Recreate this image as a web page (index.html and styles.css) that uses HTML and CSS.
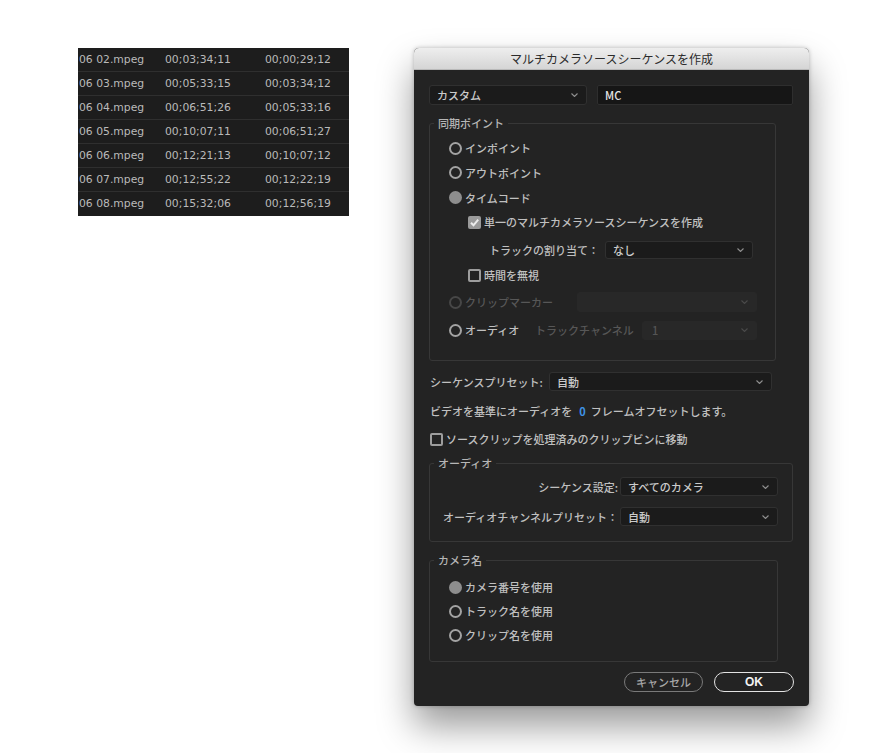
FILE: index.html
```html
<!DOCTYPE html>
<html lang="ja">
<head>
<meta charset="utf-8">
<title>マルチカメラソースシーケンスを作成</title>
<link rel="stylesheet" href="styles.css">
</head>
<body>
<div class="page">
  <div class="clips">
    <div class="trow"><span class="c1">06 02.mpeg</span><span class="c2">00;03;34;11</span><span class="c3">00;00;29;12</span></div>
    <div class="trow"><span class="c1">06 03.mpeg</span><span class="c2">00;05;33;15</span><span class="c3">00;03;34;12</span></div>
    <div class="trow"><span class="c1">06 04.mpeg</span><span class="c2">00;06;51;26</span><span class="c3">00;05;33;16</span></div>
    <div class="trow"><span class="c1">06 05.mpeg</span><span class="c2">00;10;07;11</span><span class="c3">00;06;51;27</span></div>
    <div class="trow"><span class="c1">06 06.mpeg</span><span class="c2">00;12;21;13</span><span class="c3">00;10;07;12</span></div>
    <div class="trow"><span class="c1">06 07.mpeg</span><span class="c2">00;12;55;22</span><span class="c3">00;12;22;19</span></div>
    <div class="trow"><span class="c1">06 08.mpeg</span><span class="c2">00;15;32;06</span><span class="c3">00;12;56;19</span></div>
  </div>

  <div class="dialog">
    <div class="titlebar">マルチカメラソースシーケンスを作成</div>
    <div class="dbody">
      <div class="toprow">
        <div class="select preset"><span>カスタム</span><svg class="chev" viewBox="0 0 7 4"><polyline points="0.5,0.5 3.5,3.5 6.5,0.5"/></svg></div>
        <div class="textfield">MC</div>
      </div>

      <fieldset class="group sync">
        <legend>同期ポイント</legend>
        <div class="row r1 ind-radio"><span class="radio"></span><span class="lbl">インポイント</span></div>
        <div class="row r2 ind-radio"><span class="radio"></span><span class="lbl">アウトポイント</span></div>
        <div class="row r3 ind-radio"><span class="radio on"></span><span class="lbl">タイムコード</span></div>
        <div class="row r4 ind-check"><span class="check on"><svg viewBox="0 0 13 13"><polyline points="3,6.8 5.5,9.3 10.2,3.6"/></svg></span><span class="lbl">単一のマルチカメラソースシーケンスを作成</span></div>
        <div class="row r5 ind-track"><span class="lbl">トラックの割り当て：</span><div class="select track"><span>なし</span><svg class="chev" viewBox="0 0 7 4"><polyline points="0.5,0.5 3.5,3.5 6.5,0.5"/></svg></div></div>
        <div class="row r6 ind-check"><span class="check"></span><span class="lbl">時間を無視</span></div>
        <div class="row r7 ind-radio"><span class="radio off"></span><span class="lbl dim marker-lbl">クリップマーカー</span><div class="select disabled marker"><span></span><svg class="chev" viewBox="0 0 7 4"><polyline points="0.5,0.5 3.5,3.5 6.5,0.5"/></svg></div></div>
        <div class="row r8 ind-radio"><span class="radio"></span><span class="lbl audio-lbl">オーディオ</span><span class="lbl dim chan-lbl">トラックチャンネル</span><div class="select disabled chan"><span>1</span><svg class="chev" viewBox="0 0 7 4"><polyline points="0.5,0.5 3.5,3.5 6.5,0.5"/></svg></div></div>
      </fieldset>

      <div class="line preset-line"><span class="lbl">シーケンスプリセット:</span><div class="select seq"><span>自動</span><svg class="chev" viewBox="0 0 7 4"><polyline points="0.5,0.5 3.5,3.5 6.5,0.5"/></svg></div></div>
      <div class="line offset-line"><span class="lbl">ビデオを基準にオーディオを<span class="num">0</span>フレームオフセットします。</span></div>
      <div class="line move-line"><span class="check"></span><span class="lbl">ソースクリップを処理済みのクリップビンに移動</span></div>

      <fieldset class="group audio">
        <legend>オーディオ</legend>
        <div class="agrid">
          <span class="lbl right">シーケンス設定:</span>
          <div class="select"><span>すべてのカメラ</span><svg class="chev" viewBox="0 0 7 4"><polyline points="0.5,0.5 3.5,3.5 6.5,0.5"/></svg></div>
          <span class="lbl right">オーディオチャンネルプリセット：</span>
          <div class="select"><span>自動</span><svg class="chev" viewBox="0 0 7 4"><polyline points="0.5,0.5 3.5,3.5 6.5,0.5"/></svg></div>
        </div>
      </fieldset>

      <fieldset class="group camera">
        <legend>カメラ名</legend>
        <div class="row crow ind-radio"><span class="radio on"></span><span class="lbl">カメラ番号を使用</span></div>
        <div class="row crow ind-radio"><span class="radio"></span><span class="lbl">トラック名を使用</span></div>
        <div class="row crow ind-radio"><span class="radio"></span><span class="lbl">クリップ名を使用</span></div>
      </fieldset>

      <div class="buttons">
        <div class="btn cancel">キャンセル</div>
        <div class="btn ok">OK</div>
      </div>
    </div>
  </div>
</div>
</body>
</html>
```

FILE: styles.css
```css
html, body {
  margin: 0;
  padding: 0;
  background: #ffffff;
}

body {
  font-family: "Noto Sans CJK JP", "DejaVu Sans", sans-serif;
  font-size: 11px;
  font-weight: 500;
  color: #c0c0c0;
}

.page {
  display: flex;
  align-items: flex-start;
  padding: 48px 0 0 78px;
  gap: 65px;
  min-height: 753px;
  box-sizing: border-box;
}

/* clip table */
.clips {
  width: 271px;
  background: #1d1d1d;
  font-family: "DejaVu Sans", sans-serif;
  font-weight: normal;
  font-size: 10.8px;
  color: #bababa;
}

.trow {
  display: flex;
  align-items: center;
  height: 24px;
  box-sizing: border-box;
  border-bottom: 1px solid #2f2f2f;
  padding-bottom: 1px;
}

.trow:last-child {
  border-bottom: none;
}

.c1 { width: 86px; padding-left: 1px; }
.c2 { width: 100px; }
.c3 { flex: 1; }

/* dialog */
.dialog {
  width: 395px;
  background: #232323;
  border-radius: 5px 5px 4px 4px;
  box-shadow: 0 20px 36px rgba(0, 0, 0, 0.4), 0 0 4px rgba(0, 0, 0, 0.25);
}

.titlebar {
  height: 22px;
  box-sizing: border-box;
  background: linear-gradient(#eeeeee, #d5d5d5);
  border-bottom: 1px solid #b9b9b9;
  border-radius: 5px 5px 0 0;
  color: #2b2b2b;
  font-size: 12px;
  font-weight: normal;
  line-height: 21px;
  text-align: center;
}

.dbody {
  display: flex;
  flex-direction: column;
  align-items: flex-start;
  padding: 15px 15px 14px 15px;
}

.toprow {
  display: flex;
  gap: 10px;
  height: 20px;
}

.select {
  position: relative;
  display: flex;
  align-items: center;
  box-sizing: border-box;
  height: 19px;
  background: #1b1b1b;
  border: 1px solid #303030;
  border-radius: 3px;
  padding-left: 7px;
  color: #cbcbcb;
}

.select .chev {
  position: absolute;
  right: 8px;
  top: 50%;
  width: 7px;
  height: 4px;
  margin-top: -2px;
  fill: none;
  stroke: #8f8f8f;
  stroke-width: 1.1;
}

.select.preset { width: 158px; height: 20px; }

.textfield {
  display: flex;
  align-items: center;
  box-sizing: border-box;
  width: 196px;
  height: 20px;
  background: #161616;
  border: 1px solid #2e2e2e;
  border-radius: 2px;
  padding-left: 7px;
  color: #e6e6e6;
}

/* groups */
.group {
  margin: 0;
  padding: 0;
  border: 1px solid #373737;
  border-radius: 3px;
  box-sizing: border-box;
  min-width: 0;
}

.group legend {
  padding: 0 4px;
  margin-left: 4px;
  line-height: 14px;
  height: 14px;
  color: #b6b6b6;
}

.sync {
  width: 347px;
  margin-top: 11px;
  padding: 6px 0 20px 0;
}

.row {
  display: flex;
  align-items: center;
}

.ind-radio { padding-left: 19px; }
.ind-check { padding-left: 38px; }
.ind-track { padding-left: 59px; }

.r1 { height: 24px; }
.r2 { height: 25px; }
.r3 { height: 25px; }
.r4 { height: 24px; }
.r5 { height: 32px; }
.r6 { height: 18px; }
.r7 { height: 36px; }
.r8 { height: 20px; }

.radio {
  width: 13px;
  height: 13px;
  box-sizing: border-box;
  border: 2px solid #a3a3a3;
  border-radius: 50%;
  margin-right: 3px;
  flex: none;
}

.radio.on {
  border-color: #8e8e8e;
  background: #8e8e8e;
}

.radio.off {
  border-color: #474747;
}

.check {
  position: relative;
  width: 13px;
  height: 13px;
  box-sizing: border-box;
  border: 2px solid #9d9d9d;
  border-radius: 2px;
  margin-right: 3px;
  flex: none;
}

.check.on {
  border: none;
  background: #9a9a9a;
}

.check svg {
  display: block;
  width: 13px;
  height: 13px;
  fill: none;
  stroke: #ececec;
  stroke-width: 2;
}

.lbl {
  white-space: nowrap;
  line-height: 14px;
}

.dim { color: #575757; }

.select.track { width: 148px; height: 18px; margin-left: 6px; }

.marker-lbl { width: 112px; }
.select.disabled {
  background: #282828;
  border-color: #282828;
  color: #555555;
  height: 20px;
}
.select.disabled .chev { stroke: #4a4a4a; }
.select.marker { width: 180px; }

.audio-lbl { width: 70px; }
.chan-lbl { width: 107px; }
.select.chan { width: 115px; height: 19px; padding-left: 9px; }

.line {
  display: flex;
  align-items: center;
}

.preset-line {
  margin-top: 11px;
  height: 19px;
  padding-left: 1px;
}

.preset-line .lbl { width: 119px; }
.select.seq { width: 223px; }

.offset-line {
  margin-top: 10px;
  height: 20px;
  padding-left: 1px;
}

.num {
  color: #3f92e6;
  font-weight: bold;
  margin: 0 5px 0 7px;
}

.move-line {
  margin-top: 8px;
  height: 20px;
  padding-left: 1px;
}

.audio {
  width: 364px;
  margin-top: 7px;
  padding: 7px 0 15px 0;
}

.agrid {
  display: grid;
  grid-template-columns: 188px 158px;
  column-gap: 2px;
  row-gap: 11px;
  align-items: center;
}

.agrid .select { height: 19px; }

.right { text-align: right; }

.camera {
  width: 349px;
  margin-top: 11px;
  padding: 8px 0 14px 0;
}

.crow { height: 24px; }

.buttons {
  display: flex;
  gap: 11px;
  align-self: flex-end;
  margin-top: 10px;
}

.btn {
  box-sizing: border-box;
  height: 20px;
  border-radius: 10px;
  display: flex;
  align-items: center;
  justify-content: center;
}

.cancel {
  width: 79px;
  border: 1px solid #7a7a7a;
  color: #a8a8a8;
}

.ok {
  width: 80px;
  border: 1.5px solid #e3e3e3;
  color: #f2f2f2;
  font-weight: bold;
  font-family: "Liberation Sans", "DejaVu Sans", sans-serif;
  font-size: 12px;
}
```
